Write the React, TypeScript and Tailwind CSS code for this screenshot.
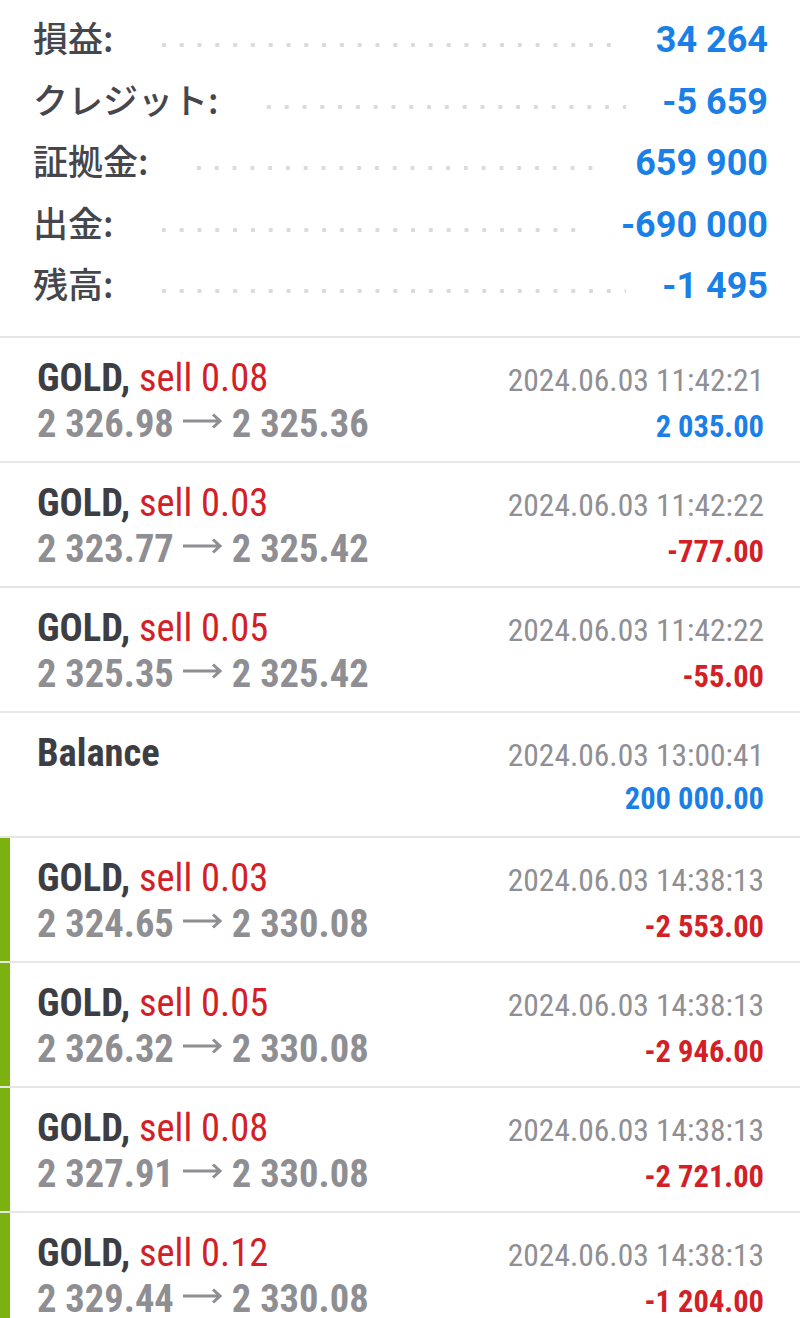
interface SummaryItem {
  label: string;
  value: string;
}

interface Deal {
  title: string;
  side?: string;
  from?: string;
  to?: string;
  time: string;
  profit: string;
  loss: boolean;
  marked: boolean;
}

const summary: SummaryItem[] = [
  { label: '損益:', value: '34 264' },
  { label: 'クレジット:', value: '-5 659' },
  { label: '証拠金:', value: '659 900' },
  { label: '出金:', value: '-690 000' },
  { label: '残高:', value: '-1 495' },
];

const deals: Deal[] = [
  { title: 'GOLD,', side: 'sell 0.08', from: '2 326.98', to: '2 325.36', time: '2024.06.03 11:42:21', profit: '2 035.00', loss: false, marked: false },
  { title: 'GOLD,', side: 'sell 0.03', from: '2 323.77', to: '2 325.42', time: '2024.06.03 11:42:22', profit: '-777.00', loss: true, marked: false },
  { title: 'GOLD,', side: 'sell 0.05', from: '2 325.35', to: '2 325.42', time: '2024.06.03 11:42:22', profit: '-55.00', loss: true, marked: false },
  { title: 'Balance', time: '2024.06.03 13:00:41', profit: '200 000.00', loss: false, marked: false },
  { title: 'GOLD,', side: 'sell 0.03', from: '2 324.65', to: '2 330.08', time: '2024.06.03 14:38:13', profit: '-2 553.00', loss: true, marked: true },
  { title: 'GOLD,', side: 'sell 0.05', from: '2 326.32', to: '2 330.08', time: '2024.06.03 14:38:13', profit: '-2 946.00', loss: true, marked: true },
  { title: 'GOLD,', side: 'sell 0.08', from: '2 327.91', to: '2 330.08', time: '2024.06.03 14:38:13', profit: '-2 721.00', loss: true, marked: true },
  { title: 'GOLD,', side: 'sell 0.12', from: '2 329.44', to: '2 330.08', time: '2024.06.03 14:38:13', profit: '-1 204.00', loss: true, marked: true },
];

function Arrow() {
  return (
    <svg width="40" height="16" viewBox="0 0 40 16" className="ml-[8px] mr-[10px] relative bottom-[5px] inline-block">
      <path d="M1 8H38M31 1.5L38 8L31 14.5" fill="none" stroke="#8e8e93" strokeWidth="3" />
    </svg>
  );
}

function SummaryRow({ item }: { item: SummaryItem }) {
  return (
    <div className="flex items-baseline h-[61.5px]">
      <span className="font-['Noto_Sans_CJK_JP',sans-serif] font-medium text-[35px] leading-none text-[#46464d]">
        {item.label}
      </span>
      <span className="flex-1 h-1 ml-[42px] mr-[36px] relative bottom-[5px] bg-[radial-gradient(circle,#dadada_2px,transparent_2.5px)] bg-[length:17.8px_4px] bg-repeat-x" />
      <span className="font-['Roboto',sans-serif] font-bold text-[36px] leading-none text-[#1a7fe6]">
        {item.value}
      </span>
    </div>
  );
}

function DealRow({ deal }: { deal: Deal }) {
  return (
    <div className="flex h-[125px] border-b-2 border-[#e6e6e6]">
      <div className={`w-[10px] shrink-0 ${deal.marked ? 'bg-[#7cb210]' : ''}`} />
      <div className="flex-1 pl-[27px] pr-[36px] pt-[18px] font-['Roboto_Condensed','Roboto',sans-serif] leading-[43px]">
        <div className="flex items-baseline justify-between">
          <span className="text-[38.5px]">
            <span className="font-bold text-[#3d3d44]">{deal.title}</span>
            {deal.side && <span className="text-[#d32027]"> {deal.side}</span>}
          </span>
          <span className="text-[31.5px] text-[#8f8f94]">{deal.time}</span>
        </div>
        <div className="flex items-baseline justify-between">
          <span className="text-[38.5px] font-bold text-[#8e8e93]">
            {deal.from && (
              <>
                {deal.from}
                <Arrow />
                {deal.to}
              </>
            )}
          </span>
          <span className={`text-[30.5px] font-bold ${deal.loss ? 'text-[#d32027]' : 'text-[#1a7fe6]'}`}>
            {deal.profit}
          </span>
        </div>
      </div>
    </div>
  );
}

export default function App() {
  return (
    <div className="w-[800px] bg-white">
      <div className="pl-[33px] pr-[32px] pt-[19px] pb-[9px] border-b-2 border-[#e6e6e6]">
        {summary.map((item) => (
          <SummaryRow key={item.label} item={item} />
        ))}
      </div>
      {deals.map((deal, idx) => (
        <DealRow key={idx} deal={deal} />
      ))}
    </div>
  );
}
